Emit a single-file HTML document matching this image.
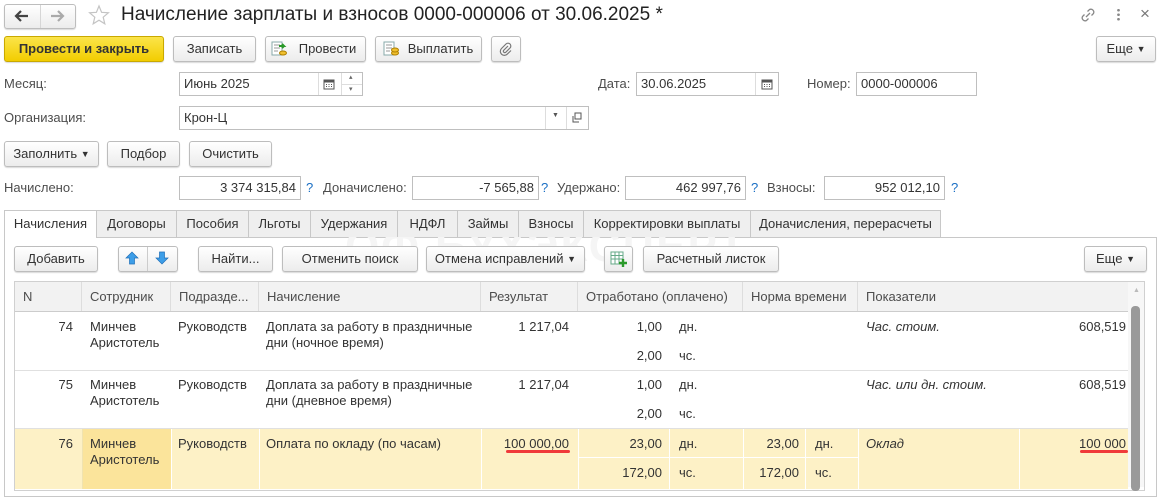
<!DOCTYPE html>
<html><head><meta charset="utf-8"><style>
*{box-sizing:border-box;margin:0;padding:0}
body{width:1160px;height:486px;overflow:hidden;background:#fff;font-family:"Liberation Sans",Arial,sans-serif;font-size:13px;color:#333;position:relative}
.a{position:absolute;white-space:nowrap}
.btn{position:absolute;border:1px solid #bdbdbd;border-radius:3px;background:linear-gradient(#fff,#ececec);box-shadow:0 1px 1px rgba(0,0,0,.15);text-align:center;color:#333;line-height:24px;height:26px}
.fld{position:absolute;border:1px solid #bfbfbf;background:#fff;height:24px;line-height:22px;padding:0 4px;color:#333}
.lbl{position:absolute;color:#4d4d4d;line-height:16px}
.q{position:absolute;color:#1a6fc4;font-size:13px}
.tab{position:absolute;top:210px;height:27px;border:1px solid #c8c8c8;border-bottom:none;background:#efefef;line-height:26px;text-align:center;color:#333}
.hd{position:absolute;top:282px;height:30px;line-height:30px;background:#f2f2f2;border-right:1px solid #ddd;padding-left:8px;color:#4d4d4d}
.c{position:absolute;line-height:16px;color:#333}
.r{text-align:right}
.hl{position:absolute;height:1px;background:#e0e0e0}
.vl{position:absolute;width:1px;background:#f0e3b0}
.dd{font-size:9px;vertical-align:1px}
</style></head><body>
<!-- top bar -->
<div class="btn" style="left:4px;top:4px;width:72px;height:25px"></div>
<div class="a" style="left:40px;top:5px;width:1px;height:23px;background:#d6d6d6"></div>
<svg class="a" style="left:14px;top:9px" width="16" height="14"><path d="M2 7H14M7 2L2 7L7 12" stroke="#444" stroke-width="2.2" fill="none"/></svg>
<svg class="a" style="left:49px;top:9px" width="16" height="14"><path d="M2 7H14M9 2L14 7L9 12" stroke="#aaa" stroke-width="2.2" fill="none"/></svg>
<svg class="a" style="left:88px;top:4px" width="22" height="22"><path d="M11 2L13.6 8.3 20.4 8.8 15.2 13.2 16.8 19.8 11 16.2 5.2 19.8 6.8 13.2 1.6 8.8 8.4 8.3Z" fill="none" stroke="#c4c4c4" stroke-width="1.2"/></svg>
<div class="a" style="left:121px;top:4px;font-size:19px;color:#222;line-height:22px">Начисление зарплаты и взносов 0000-000006 от 30.06.2025 *</div>
<svg class="a" style="left:1079px;top:6px" width="18" height="18"><path d="M7 11L11 7M8.5 5.5L10.5 3.5a3 3 0 0 1 4 4L12.5 9.5M9.5 12.5L7.5 14.5a3 3 0 0 1-4-4L5.5 8.5" stroke="#888" stroke-width="1.3" fill="none"/></svg>
<div class="a" style="left:1117px;top:8px;width:3px;height:14px;background:radial-gradient(circle,#888 1.2px,transparent 1.5px) 0 0/3px 4.5px"></div>
<div class="a" style="left:1140px;top:4px;font-size:17px;color:#777">×</div>
<!-- row 2 -->
<div class="btn" style="left:4px;top:36px;width:160px;background:linear-gradient(#fbe44a,#f2cd00);border-color:#c9a900;font-weight:bold;color:#333">Провести и закрыть</div>
<div class="btn" style="left:173px;top:36px;width:83px">Записать</div>
<div class="btn" style="left:265px;top:36px;width:101px;padding-left:24px">Провести</div>
<svg class="a" style="left:271px;top:41px" width="16" height="16"><rect x="1" y="1" width="10" height="13" fill="#fff" stroke="#8aa"/><path d="M3 4h6M3 7h6M3 10h4" stroke="#999"/><path d="M8 5h5l-2-2M13 5l-2 2" stroke="#2a9a2a" stroke-width="2" fill="none"/><ellipse cx="12" cy="12" rx="3.5" ry="2" fill="#f0c030" stroke="#b08000"/></svg>
<div class="btn" style="left:375px;top:36px;width:107px;padding-left:24px">Выплатить</div>
<svg class="a" style="left:383px;top:41px" width="16" height="16"><rect x="1" y="1" width="10" height="13" fill="#fff" stroke="#8aa"/><path d="M3 4h6M3 7h6M3 10h4" stroke="#999"/><ellipse cx="12" cy="12" rx="3.5" ry="2" fill="#f0c030" stroke="#b08000"/><ellipse cx="12" cy="9" rx="3.5" ry="2" fill="#f0c030" stroke="#b08000"/></svg>
<div class="btn" style="left:491px;top:36px;width:30px"></div>
<svg class="a" style="left:499px;top:42px" width="14" height="14"><path d="M9 4L4.5 8.5a1.5 1.5 0 0 0 2 2L11 6a2.8 2.8 0 0 0-4-4L2.5 6.5a4 4 0 0 0 5.7 5.7L12 8.5" stroke="#777" stroke-width="1.2" fill="none"/></svg>
<div class="btn" style="left:1096px;top:36px;width:60px">Еще <span class="dd">▼</span></div>
<!-- month row -->
<div class="lbl" style="left:4px;top:76px">Месяц:</div>
<div class="fld" style="left:179px;top:72px;width:184px">Июнь 2025</div>
<div class="a" style="left:318px;top:73px;width:1px;height:22px;background:#ddd"></div>
<div class="a" style="left:341px;top:73px;width:1px;height:22px;background:#ddd"></div>
<div class="a" style="left:342px;top:84px;width:20px;height:1px;background:#ddd"></div>
<svg class="a" style="left:323px;top:78px" width="12" height="12"><rect x="1" y="2" width="10" height="9" fill="none" stroke="#555"/><rect x="1" y="2" width="10" height="2.5" fill="#555"/><path d="M3 6.5h1M5.5 6.5h1M8 6.5h1M3 8.5h1M5.5 8.5h1M8 8.5h1" stroke="#555"/></svg>
<div class="a" style="left:349px;top:73px;font-size:7px;color:#666">▴</div>
<div class="a" style="left:349px;top:85px;font-size:7px;color:#666">▾</div>
<div class="lbl" style="left:598px;top:76px">Дата:</div>
<div class="fld" style="left:636px;top:72px;width:143px">30.06.2025</div>
<div class="a" style="left:755px;top:73px;width:1px;height:22px;background:#ddd"></div>
<svg class="a" style="left:761px;top:78px" width="12" height="12"><rect x="1" y="2" width="10" height="9" fill="none" stroke="#555"/><rect x="1" y="2" width="10" height="2.5" fill="#555"/><path d="M3 6.5h1M5.5 6.5h1M8 6.5h1M3 8.5h1M5.5 8.5h1M8 8.5h1" stroke="#555"/></svg>
<div class="lbl" style="left:807px;top:76px">Номер:</div>
<div class="fld" style="left:856px;top:72px;width:121px">0000-000006</div>
<!-- org -->
<div class="lbl" style="left:4px;top:110px">Организация:</div>
<div class="fld" style="left:179px;top:106px;width:410px">Крон-Ц</div>
<div class="a" style="left:545px;top:107px;width:1px;height:22px;background:#ddd"></div>
<div class="a" style="left:566px;top:107px;width:1px;height:22px;background:#ddd"></div>
<div class="a" style="left:552px;top:112px;font-size:7px;color:#555">▼</div>
<svg class="a" style="left:571px;top:112px" width="12" height="12"><rect x="4" y="1" width="6" height="6" fill="none" stroke="#555"/><path d="M2 4v6h6" fill="none" stroke="#555"/></svg>
<!-- fill buttons -->
<div class="btn" style="left:4px;top:141px;width:95px">Заполнить <span class="dd">▼</span></div>
<div class="btn" style="left:107px;top:141px;width:73px">Подбор</div>
<div class="btn" style="left:189px;top:141px;width:83px">Очистить</div>
<!-- totals -->
<div class="lbl" style="left:4px;top:180px">Начислено:</div>
<div class="fld r" style="left:179px;top:176px;width:122px">3 374 315,84</div>
<div class="q" style="left:306px;top:180px">?</div>
<div class="lbl" style="left:323px;top:180px">Доначислено:</div>
<div class="fld r" style="left:412px;top:176px;width:127px">-7 565,88</div>
<div class="q" style="left:541px;top:180px">?</div>
<div class="lbl" style="left:557px;top:180px">Удержано:</div>
<div class="fld r" style="left:625px;top:176px;width:121px">462 997,76</div>
<div class="q" style="left:751px;top:180px">?</div>
<div class="lbl" style="left:767px;top:180px">Взносы:</div>
<div class="fld r" style="left:824px;top:176px;width:121px">952 012,10</div>
<div class="q" style="left:951px;top:180px">?</div>
<!-- panel -->
<div class="a" style="left:4px;top:237px;width:1153px;height:260px;border:1px solid #c8c8c8"></div>
<div class="a" style="left:345px;top:222px;font-size:44px;font-weight:bold;color:#f5f5f5;letter-spacing:2px">ОФ БУХЭКСПЕРТ</div>
<div class="tab" style="left:96px;width:81px">Договоры</div>
<div class="tab" style="left:176px;width:73px">Пособия</div>
<div class="tab" style="left:248px;width:63px">Льготы</div>
<div class="tab" style="left:310px;width:88px">Удержания</div>
<div class="tab" style="left:397px;width:61px">НДФЛ</div>
<div class="tab" style="left:457px;width:62px">Займы</div>
<div class="tab" style="left:518px;width:66px">Взносы</div>
<div class="tab" style="left:583px;width:168px">Корректировки выплаты</div>
<div class="tab" style="left:750px;width:191px">Доначисления, перерасчеты</div>
<div class="tab" style="left:4px;width:93px;background:#fff;height:28px">Начисления</div>
<!-- toolbar -->
<div class="btn" style="left:14px;top:246px;width:84px">Добавить</div>
<div class="btn" style="left:118px;top:246px;width:60px"></div>
<div class="a" style="left:147px;top:247px;width:1px;height:24px;background:#ccc"></div>
<svg class="a" style="left:125px;top:251px" width="14" height="14"><path d="M7 1L13 7H9.5V13H4.5V7H1Z" fill="#3d9ee8" stroke="#1f6fb8" stroke-width=".7"/></svg>
<svg class="a" style="left:155px;top:251px" width="14" height="14"><path d="M7 13L13 7H9.5V1H4.5V7H1Z" fill="#3d9ee8" stroke="#1f6fb8" stroke-width=".7"/></svg>
<div class="btn" style="left:198px;top:246px;width:75px">Найти...</div>
<div class="btn" style="left:282px;top:246px;width:136px">Отменить поиск</div>
<div class="btn" style="left:426px;top:246px;width:159px">Отмена исправлений <span class="dd">▼</span></div>
<div class="btn" style="left:604px;top:246px;width:29px"></div>
<svg class="a" style="left:610px;top:250px" width="18" height="18"><rect x="1" y="2" width="12" height="12" fill="#fff" stroke="#6a8"/><path d="M1 5.5h12M5 2v12M9 2v12M1 9h12" stroke="#6a8"/><path d="M13 9v8M9 13h8" stroke="#2a9a2a" stroke-width="2.4"/></svg>
<div class="btn" style="left:643px;top:246px;width:136px">Расчетный листок</div>
<div class="btn" style="left:1084px;top:246px;width:63px">Еще <span class="dd">▼</span></div>
<!-- table -->
<div class="a" style="left:14px;top:281px;width:1131px;height:210px;border:1px solid #d0d0d0"></div>
<div class="hd" style="left:15px;width:67px">N</div>
<div class="hd" style="left:82px;width:89px">Сотрудник</div>
<div class="hd" style="left:171px;width:88px">Подразде...</div>
<div class="hd" style="left:259px;width:222px">Начисление</div>
<div class="hd" style="left:481px;width:97px">Результат</div>
<div class="hd" style="left:578px;width:165px">Отработано (оплачено)</div>
<div class="hd" style="left:743px;width:115px">Норма времени</div>
<div class="hd" style="left:858px;width:271px;border-right:none">Показатели</div>
<div class="a" style="left:15px;top:311px;width:1113px;height:1px;background:#ccc"></div>
<!-- scrollbar -->
<div class="a" style="left:1128px;top:282px;width:16px;height:205px;background:#f7f7f7"></div>
<div class="a" style="left:1133px;top:287px;font-size:7px;color:#bbb">▲</div>
<div class="a" style="left:1131px;top:306px;width:9px;height:185px;background:#9a9a9a;border-radius:4px"></div>
<!-- row 74 -->
<div class="c r" style="left:15px;top:319px;width:58px">74</div>
<div class="c" style="left:90px;top:319px">Минчев<br>Аристотель</div>
<div class="c" style="left:178px;top:319px">Руководств</div>
<div class="c" style="left:266px;top:319px">Доплата за работу в праздничные<br>дни (ночное время)</div>
<div class="c r" style="left:481px;top:319px;width:88px">1 217,04</div>
<div class="c r" style="left:578px;top:319px;width:84px">1,00</div>
<div class="c" style="left:679px;top:319px">дн.</div>
<div class="c r" style="left:578px;top:348px;width:84px">2,00</div>
<div class="c" style="left:679px;top:348px">чс.</div>
<div class="c" style="left:866px;top:319px;font-style:italic">Час. стоим.</div>
<div class="c r" style="left:1020px;top:319px;width:106px">608,519</div>
<div class="hl" style="left:15px;top:370px;width:1113px"></div>
<!-- row 75 -->
<div class="c r" style="left:15px;top:377px;width:58px">75</div>
<div class="c" style="left:90px;top:377px">Минчев<br>Аристотель</div>
<div class="c" style="left:178px;top:377px">Руководств</div>
<div class="c" style="left:266px;top:377px">Доплата за работу в праздничные<br>дни (дневное время)</div>
<div class="c r" style="left:481px;top:377px;width:88px">1 217,04</div>
<div class="c r" style="left:578px;top:377px;width:84px">1,00</div>
<div class="c" style="left:679px;top:377px">дн.</div>
<div class="c r" style="left:578px;top:406px;width:84px">2,00</div>
<div class="c" style="left:679px;top:406px">чс.</div>
<div class="c" style="left:866px;top:377px;font-style:italic">Час. или дн. стоим.</div>
<div class="c r" style="left:1020px;top:377px;width:106px">608,519</div>
<div class="hl" style="left:15px;top:428px;width:1113px"></div>
<!-- row 76 -->
<div class="a" style="left:15px;top:429px;width:1113px;height:60px;background:#fdf1c6"></div>
<div class="a" style="left:82px;top:429px;width:89px;height:60px;background:#fbe49b"></div>
<div class="vl" style="left:82px;top:429px;height:60px"></div>
<div class="vl" style="left:171px;top:429px;height:60px;background:#fff"></div>
<div class="vl" style="left:259px;top:429px;height:60px;background:#fff"></div>
<div class="vl" style="left:481px;top:429px;height:60px;background:#fff"></div>
<div class="vl" style="left:578px;top:429px;height:60px;background:#fff"></div>
<div class="vl" style="left:669px;top:429px;height:60px;background:#fff"></div>
<div class="vl" style="left:743px;top:429px;height:60px;background:#fff"></div>
<div class="vl" style="left:805px;top:429px;height:60px;background:#fff"></div>
<div class="vl" style="left:858px;top:429px;height:60px;background:#fff"></div>
<div class="vl" style="left:1019px;top:429px;height:60px;background:#fff"></div>
<div class="a" style="left:579px;top:457px;width:279px;height:1px;background:#fff"></div>
<div class="c r" style="left:15px;top:436px;width:58px">76</div>
<div class="c" style="left:90px;top:436px">Минчев<br>Аристотель</div>
<div class="c" style="left:178px;top:436px">Руководств</div>
<div class="c" style="left:266px;top:436px">Оплата по окладу (по часам)</div>
<div class="c r" style="left:481px;top:436px;width:88px">100 000,00</div>
<div class="a" style="left:506px;top:450px;width:64px;height:3px;background:#f03a3a;border-radius:2px"></div>
<div class="c r" style="left:578px;top:436px;width:84px">23,00</div>
<div class="c" style="left:679px;top:436px">дн.</div>
<div class="c r" style="left:743px;top:436px;width:56px">23,00</div>
<div class="c" style="left:815px;top:436px">дн.</div>
<div class="c r" style="left:578px;top:465px;width:84px">172,00</div>
<div class="c" style="left:679px;top:465px">чс.</div>
<div class="c r" style="left:743px;top:465px;width:56px">172,00</div>
<div class="c" style="left:815px;top:465px">чс.</div>
<div class="c" style="left:866px;top:436px;font-style:italic">Оклад</div>
<div class="c r" style="left:1020px;top:436px;width:106px">100 000</div>
<div class="a" style="left:1080px;top:450px;width:48px;height:3px;background:#f03a3a;border-radius:2px"></div>
</body></html>
